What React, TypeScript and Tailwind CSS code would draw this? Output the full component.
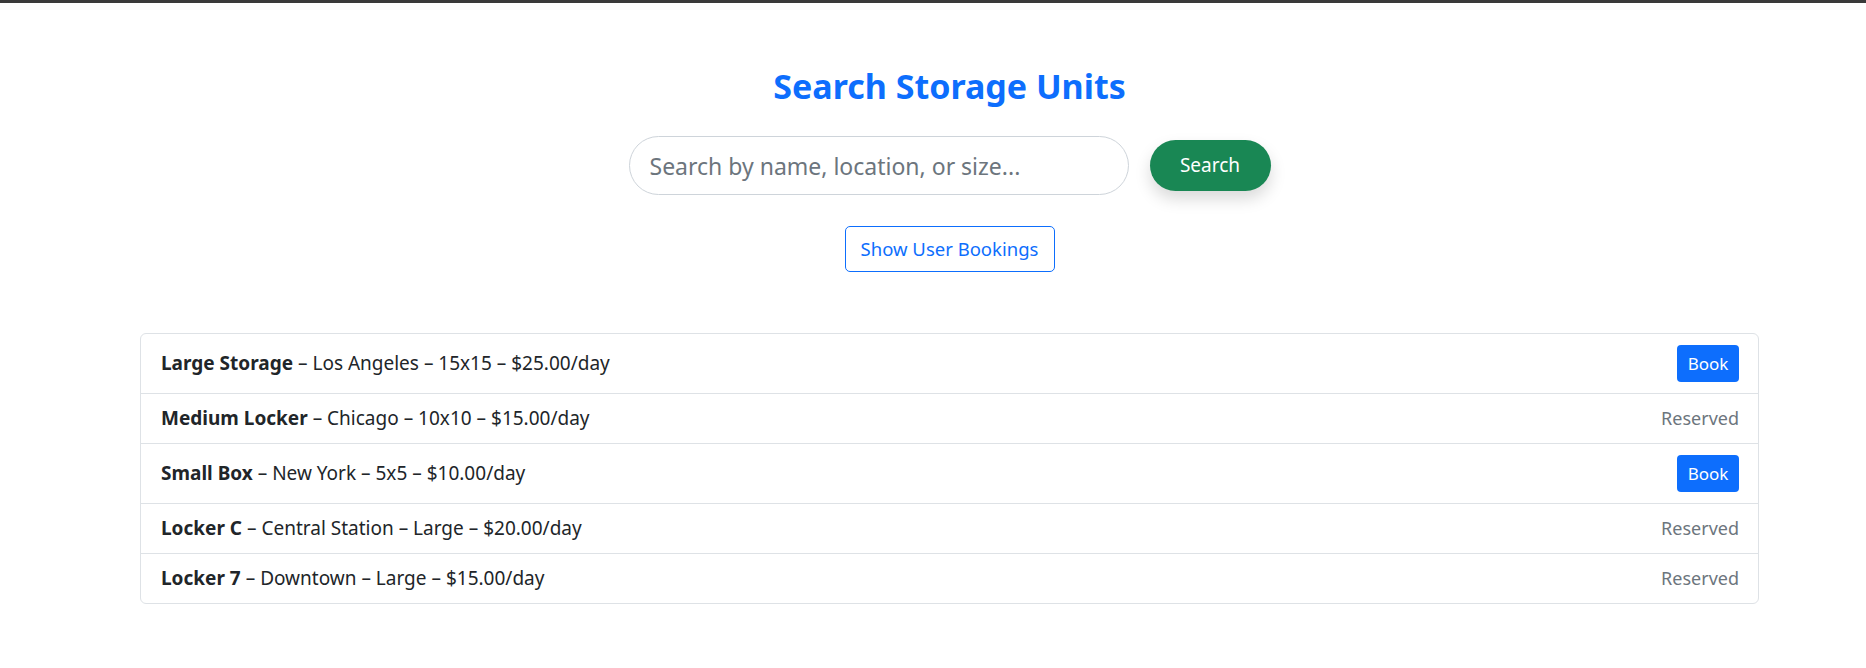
import { useState } from 'react'

interface Unit {
  id: number
  name: string
  location: string
  size: string
  price: number
  reserved: boolean
}

const UNITS: Unit[] = [
  { id: 1, name: 'Large Storage', location: 'Los Angeles', size: '15x15', price: 25, reserved: false },
  { id: 2, name: 'Medium Locker', location: 'Chicago', size: '10x10', price: 15, reserved: true },
  { id: 3, name: 'Small Box', location: 'New York', size: '5x5', price: 10, reserved: false },
  { id: 4, name: 'Locker C', location: 'Central Station', size: 'Large', price: 20, reserved: true },
  { id: 5, name: 'Locker 7', location: 'Downtown', size: 'Large', price: 15, reserved: true },
]

export default function App() {
  const [query, setQuery] = useState('')

  return (
    <div className="min-h-[668px] bg-white text-[#212529] font-['Noto_Sans',sans-serif]">
      <div className="h-[3px] bg-[#3a3a3a]" />

      <div className="ml-[33px] px-[107px] pt-[63px]">
        <h1 className="text-center text-[34px] font-bold leading-[40px] text-[#0d6efd]">
          Search Storage Units
        </h1>

        {/* search */}
        <div className="mt-[30px] flex items-center justify-center gap-[21px]">
          <input
            value={query}
            onChange={(e) => setQuery(e.target.value)}
            placeholder="Search by name, location, or size..."
            className="h-[59px] w-[500px] rounded-full border border-[#ced4da] px-[20px] text-[23px] text-[#212529] outline-none placeholder:text-[#6c757d]"
          />
          <button className="h-[51px] w-[121px] rounded-full bg-[#198754] text-[19px] text-white shadow-[0_8px_16px_rgba(0,0,0,0.15)]">
            Search
          </button>
        </div>

        <div className="mt-[31px] flex justify-center">
          <button className="h-[46px] w-[210px] rounded-[5px] border border-[#0d6efd] text-[18.5px] text-[#0d6efd]">
            Show User Bookings
          </button>
        </div>

        {/* results */}
        <ul className="mt-[61px] rounded-[6px] border border-[#dee2e6]">
          {UNITS.map((u, i) => (
            <li
              key={u.id}
              className={
                'flex items-center justify-between py-[11px] pl-[20px] pr-[19px] text-[19px] leading-[27px] ' +
                (i > 0 ? 'border-t border-[#dee2e6]' : '')
              }
            >
              <span>
                <strong className="font-bold">{u.name}</strong> – {u.location} – {u.size} – ${u.price.toFixed(2)}/day
              </span>
              {u.reserved ? (
                <span className="text-[18px] text-[#6c757d]">Reserved</span>
              ) : (
                <button className="h-[37px] w-[62px] rounded-[4px] bg-[#0d6efd] text-[17px] text-white">Book</button>
              )}
            </li>
          ))}
        </ul>
      </div>
    </div>
  )
}
